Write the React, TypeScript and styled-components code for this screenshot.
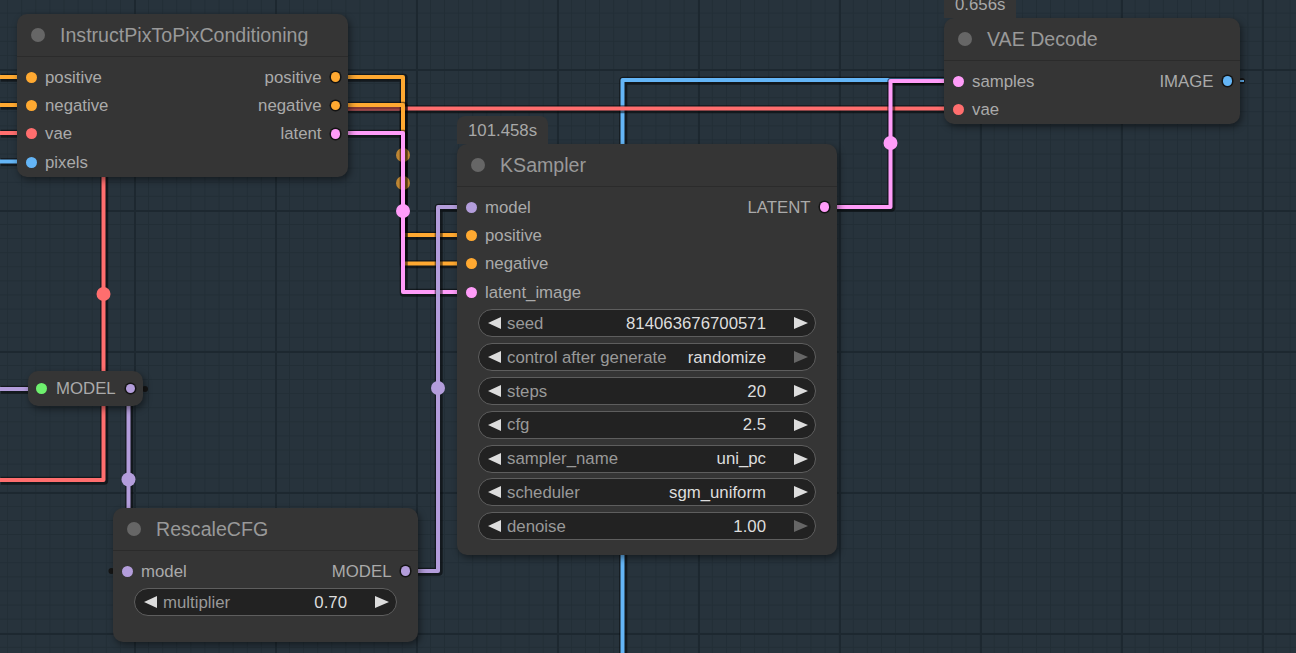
import React from "react";
import styled, { createGlobalStyle } from "styled-components";

const GlobalStyle = createGlobalStyle`
  html, body {
    margin: 0;
    padding: 0;
    overflow: hidden;
    background: #27333c;
  }

  body {
    font-family: "Liberation Sans", Arial, sans-serif;
  }
`;

const COLORS = {
  cond: "#ffa931",
  vae: "#ff6e6e",
  image: "#64b5f6",
  latent: "#ff9cf9",
  model: "#b39ddb",
  clip: "#6ef06e",
};

const Canvas = styled.div`
  position: relative;
  width: 1296px;
  height: 653px;
  overflow: hidden;
  background-color: #27333c;
  background-image: linear-gradient(to right, #1d2830 2px, transparent 2px),
    linear-gradient(to bottom, #1d2830 2px, transparent 2px),
    linear-gradient(to right, #222e36 1px, transparent 1px),
    linear-gradient(to bottom, #222e36 1px, transparent 1px);
  background-size: 141px 141px, 141px 141px, 14.1px 14.1px, 14.1px 14.1px;
  background-position: 134px 69px;
`;

const LinkLayer = styled.svg`
  position: absolute;
  left: 0;
  top: 0;
  z-index: 0;
`;

const NodeFrame = styled.div<{ $x: number; $y: number; $w: number; $h: number }>`
  position: absolute;
  left: ${(p) => p.$x}px;
  top: ${(p) => p.$y}px;
  width: ${(p) => p.$w}px;
  height: ${(p) => p.$h}px;
  box-sizing: border-box;
  background: #353535;
  border-radius: 10px;
  box-shadow: 2px 3px 7px rgba(0, 0, 0, 0.45);
  z-index: 1;
`;

const Badge = styled.div`
  position: absolute;
  left: 0;
  bottom: 100%;
  height: 28px;
  padding: 1px 11px 0;
  box-sizing: border-box;
  line-height: 28px;
  background: #353535;
  border-radius: 8px 8px 0 0;
  color: #a8a8a8;
  font-size: 16.8px;
`;

const Header = styled.div`
  height: 42px;
  display: flex;
  align-items: center;
  gap: 15px;
  padding-left: 14px;
  border-bottom: 1px solid #2b2b2b;
`;

const TitleDot = styled.span`
  width: 14px;
  height: 14px;
  border-radius: 50%;
  background: #666;
`;

const Title = styled.span`
  font-size: 19.6px;
  color: #999;
  line-height: 1;
  padding-top: 2px;
`;

const Body = styled.div`
  padding-top: 6px;
`;

const SlotRow = styled.div`
  height: 28.33px;
  display: flex;
  align-items: center;
  justify-content: space-between;
`;

const Slot = styled.div<{ $side: "in" | "out" }>`
  display: flex;
  align-items: center;
  flex-direction: ${(p) => (p.$side === "out" ? "row-reverse" : "row")};
  gap: 8.5px;
  padding-left: ${(p) => (p.$side === "in" ? "8.5px" : "0")};
  padding-right: ${(p) => (p.$side === "out" ? "7px" : "0")};
`;

const Dot = styled.span<{ $color: string; $ring?: boolean }>`
  width: ${(p) => (p.$ring ? "9.5px" : "11px")};
  height: ${(p) => (p.$ring ? "9.5px" : "11px")};
  margin: ${(p) => (p.$ring ? "0 0.75px" : "0")};
  border-radius: 50%;
  background: ${(p) => p.$color};
  box-shadow: ${(p) => (p.$ring ? "0 0 0 1.5px #141414" : "none")};
  flex-shrink: 0;
`;

const SlotLabel = styled.span`
  font-size: 16.8px;
  color: #aaa;
  line-height: 1;
  padding-top: 2px;
`;

const Widgets = styled.div`
  display: flex;
  flex-direction: column;
  gap: 5.83px;
  padding: 3px 21px 0;
`;

const Widget = styled.div`
  height: 28px;
  box-sizing: border-box;
  display: flex;
  align-items: center;
  padding: 0 7px 0 9px;
  background: #222;
  border: 1px solid #5e5e5e;
  border-radius: 14px;
  font-size: 16.8px;
  line-height: 1;
`;

const Arrow = styled.span<{ $dir: "left" | "right"; $dim?: boolean }>`
  width: 0;
  height: 0;
  flex-shrink: 0;
  border-top: 6.5px solid transparent;
  border-bottom: 6.5px solid transparent;
  ${(p) =>
    p.$dir === "left"
      ? `border-right: 13px solid ${p.$dim ? "#666" : "#ddd"};`
      : `border-left: 14px solid ${p.$dim ? "#666" : "#ddd"}; margin-left: 28px;`}
`;

const WidgetLabel = styled.span`
  flex: 1;
  margin-left: 6px;
  padding-top: 2px;
  color: #999;
  white-space: nowrap;
`;

const WidgetValue = styled.span`
  padding-top: 2px;
  color: #ddd;
  white-space: nowrap;
`;

const Pill = styled.div<{ $x: number; $y: number; $w: number }>`
  position: absolute;
  left: ${(p) => p.$x}px;
  top: ${(p) => p.$y}px;
  width: ${(p) => p.$w}px;
  height: 35px;
  box-sizing: border-box;
  display: flex;
  align-items: center;
  padding: 0 7px 0 8px;
  background: #353535;
  border-radius: 10px;
  box-shadow: 2px 3px 7px rgba(0, 0, 0, 0.45);
  z-index: 1;
`;

const PillLabel = styled.span`
  flex: 1;
  margin-left: 9px;
  padding-top: 2px;
  font-size: 16.8px;
  color: #aaa;
  line-height: 1;
`;

type SlotDef = [string, string];
type RowDef = { in?: SlotDef; out?: SlotDef };
type WidgetDef = { label: string; value: string; dimLeft?: boolean; dimRight?: boolean };

type NodeProps = {
  x: number;
  y: number;
  w: number;
  h: number;
  title: string;
  badge?: string;
  rows: RowDef[];
  widgets?: WidgetDef[];
};

const GraphNode: React.FC<NodeProps> = ({ x, y, w, h, title, badge, rows, widgets }) => (
  <NodeFrame $x={x} $y={y} $w={w} $h={h}>
    {badge && <Badge>{badge}</Badge>}
    <Header>
      <TitleDot />
      <Title>{title}</Title>
    </Header>
    <Body>
      {rows.map((row, i) => (
        <SlotRow key={i}>
          {row.in ? (
            <Slot $side="in">
              <Dot $color={row.in[1]} />
              <SlotLabel>{row.in[0]}</SlotLabel>
            </Slot>
          ) : (
            <span />
          )}
          {row.out && (
            <Slot $side="out">
              <Dot $color={row.out[1]} $ring />
              <SlotLabel>{row.out[0]}</SlotLabel>
            </Slot>
          )}
        </SlotRow>
      ))}
      {widgets && (
        <Widgets>
          {widgets.map((wd) => (
            <Widget key={wd.label}>
              <Arrow $dir="left" $dim={wd.dimLeft} />
              <WidgetLabel>{wd.label}</WidgetLabel>
              <WidgetValue>{wd.value}</WidgetValue>
              <Arrow $dir="right" $dim={wd.dimRight} />
            </Widget>
          ))}
        </Widgets>
      )}
    </Body>
  </NodeFrame>
);

type LinkDef = { d: string; color: string };
type MarkerDef = { cx: number; cy: number; color: string; dim?: boolean };

// draw order matters: later links sit on top
const lowerLinks: LinkDef[] = [
  { d: "M622.5 660 V80 H957", color: COLORS.image },
  { d: "M0 480 H103.5 V108.5 H957", color: COLORS.vae },
  { d: "M0 77 H31", color: COLORS.cond },
  { d: "M0 105 H31", color: COLORS.cond },
  { d: "M0 133 H31", color: COLORS.vae },
  { d: "M0 161.5 H31", color: COLORS.image },
  { d: "M0 389 H41", color: COLORS.model },
  { d: "M336 77 H403 V235 H471", color: COLORS.cond },
  { d: "M336 105 H403 V263.5 H471", color: COLORS.cond },
];

const lowerMarkers: MarkerDef[] = [
  { cx: 103.5, cy: 294, color: COLORS.vae },
  { cx: 403, cy: 155, color: COLORS.cond, dim: true },
  { cx: 403, cy: 183, color: COLORS.cond, dim: true },
];

const upperLinks: LinkDef[] = [
  { d: "M336 133 H403 V292 H471", color: COLORS.latent },
  { d: "M825 207 H890.5 V81 H957", color: COLORS.latent },
  { d: "M128.5 389 V571 H126", color: COLORS.model },
  { d: "M405 571 H438 V207 H471", color: COLORS.model },
];

const upperMarkers: MarkerDef[] = [
  { cx: 403, cy: 211, color: COLORS.latent },
  { cx: 890.5, cy: 143, color: COLORS.latent },
  { cx: 128.5, cy: 479.5, color: COLORS.model },
  { cx: 438, cy: 388, color: COLORS.model },
];

const stubs = [
  { cx: 145, cy: 389 },
  { cx: 1242, cy: 81 },
  { cx: 111.5, cy: 571 },
];

const Link: React.FC<LinkDef> = ({ d, color }) => (
  <g fill="none" strokeLinejoin="round">
    <path d={d} stroke="rgba(0,0,0,0.5)" strokeWidth={8} transform="translate(0.7 0.7)" />
    <path d={d} stroke={color} strokeWidth={4} />
  </g>
);

const Marker: React.FC<MarkerDef> = ({ cx, cy, color, dim }) => (
  <circle cx={cx} cy={cy} r={7} fill={color} opacity={dim ? 0.7 : 1} />
);

const ksamplerWidgets: WidgetDef[] = [
  { label: "seed", value: "814063676700571" },
  { label: "control after generate", value: "randomize", dimRight: true },
  { label: "steps", value: "20" },
  { label: "cfg", value: "2.5" },
  { label: "sampler_name", value: "uni_pc" },
  { label: "scheduler", value: "sgm_uniform" },
  { label: "denoise", value: "1.00", dimRight: true },
];

const App: React.FC = () => {
  return (
    <>
      <GlobalStyle />
      <Canvas>
        <LinkLayer width={1296} height={653} viewBox="0 0 1296 653">
          {lowerLinks.map((l, i) => (
            <Link key={`l${i}`} {...l} />
          ))}
          {lowerMarkers.map((m, i) => (
            <Marker key={`lm${i}`} {...m} />
          ))}
          {upperLinks.map((l, i) => (
            <Link key={`u${i}`} {...l} />
          ))}
          {upperMarkers.map((m, i) => (
            <Marker key={`um${i}`} {...m} />
          ))}
          {stubs.map((s, i) => (
            <circle key={`s${i}`} cx={s.cx} cy={s.cy} r={3} fill="#151515" />
          ))}
          <path d="M1239 81 H1244" stroke={COLORS.image} strokeWidth={2} />
        </LinkLayer>

        <GraphNode
          x={17}
          y={14}
          w={331}
          h={163}
          title="InstructPixToPixConditioning"
          rows={[
            { in: ["positive", COLORS.cond], out: ["positive", COLORS.cond] },
            { in: ["negative", COLORS.cond], out: ["negative", COLORS.cond] },
            { in: ["vae", COLORS.vae], out: ["latent", COLORS.latent] },
            { in: ["pixels", COLORS.image] },
          ]}
        />

        <GraphNode
          x={457}
          y={144}
          w={380}
          h={411}
          title="KSampler"
          badge="101.458s"
          rows={[
            { in: ["model", COLORS.model], out: ["LATENT", COLORS.latent] },
            { in: ["positive", COLORS.cond] },
            { in: ["negative", COLORS.cond] },
            { in: ["latent_image", COLORS.latent] },
          ]}
          widgets={ksamplerWidgets}
        />

        <GraphNode
          x={944}
          y={18}
          w={296}
          h={106}
          title="VAE Decode"
          badge="0.656s"
          rows={[
            { in: ["samples", COLORS.latent], out: ["IMAGE", COLORS.image] },
            { in: ["vae", COLORS.vae] },
          ]}
        />

        <GraphNode
          x={113}
          y={508}
          w={305}
          h={134}
          title="RescaleCFG"
          rows={[{ in: ["model", COLORS.model], out: ["MODEL", COLORS.model] }]}
          widgets={[{ label: "multiplier", value: "0.70" }]}
        />

        <Pill $x={28} $y={371} $w={115}>
          <Dot $color={COLORS.clip} />
          <PillLabel>MODEL</PillLabel>
          <Dot $color={COLORS.model} $ring />
        </Pill>
      </Canvas>
    </>
  );
};

export default App;
